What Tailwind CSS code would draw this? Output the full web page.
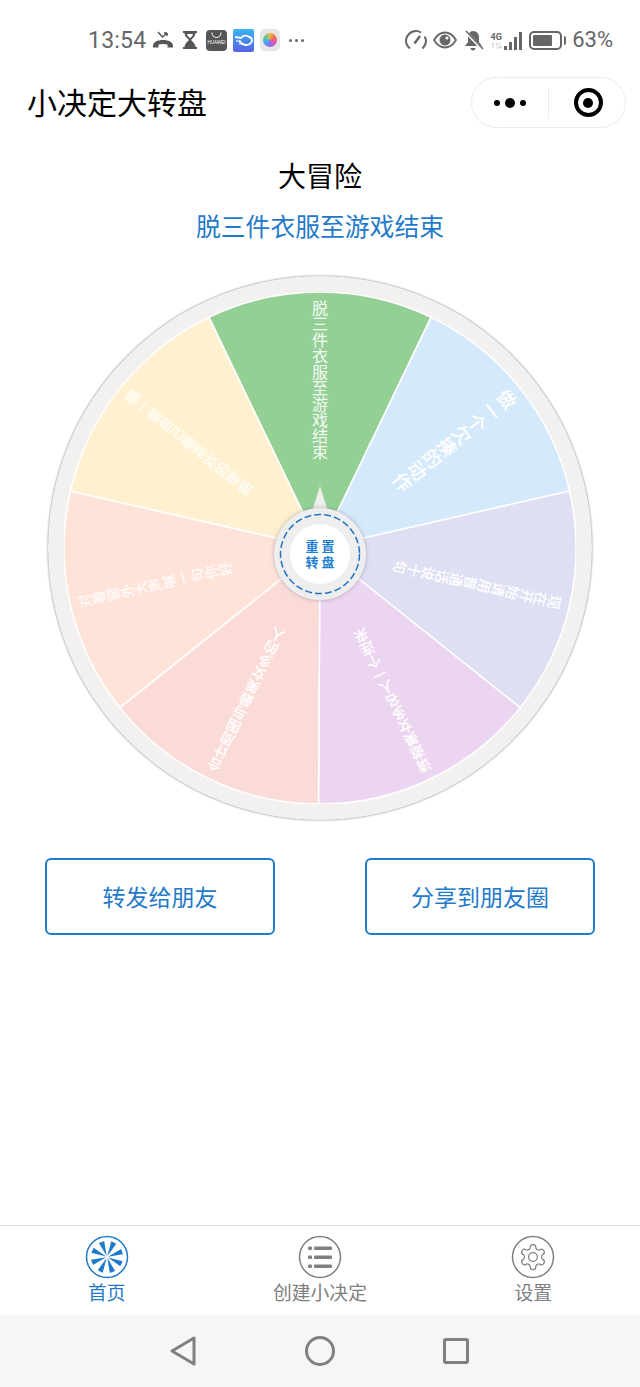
<!DOCTYPE html>
<html lang="zh-CN">
<head>
  <meta charset="UTF-8">
  <meta name="viewport" content="width=device-width, initial-scale=1.0">
  <title>小决定大转盘</title>
  <script src="https://cdn.jsdelivr.net/npm/@tailwindcss/browser@4"></script>
</head>
<body class="bg-white">
<div class="w-[640px] h-[1387px] flex flex-col overflow-hidden bg-white font-['Noto_Sans_CJK_SC',sans-serif]">

  <!-- status bar -->
  <div class="h-[77px] pt-[3px] pl-[88px] pr-[27px] flex items-center justify-between text-[#666]">
    <div class="flex items-center">
      <span class="font-['Roboto',sans-serif] text-[23px] leading-none tracking-[0.2px]">13:54</span>
      <svg class="ml-[6px]" width="22" height="22" viewBox="0 0 22 22" fill="none">
        <path d="M1 17c0-4 4.500-6 10-6s10 2 10 6v1.500h-5.500v-3c-3-.8-6-.8-9 0v3H1z" fill="#555"/>
        <path d="M6 3l4.500 5L15 4M15 4h-3M15 4v3" stroke="#555" stroke-width="1.500"/>
      </svg>
      <svg class="ml-[8px]" width="16" height="20" viewBox="0 0 16 20">
        <path d="M1 1h14v2h-1.500c0 3-2.500 5-4.500 7 2 2 4.500 4 4.500 7H15v2H1v-2h1.500c0-3 2.500-5 4.500-7-2-2-4.500-4-4.500-7H1z" fill="#555"/>
        <path d="M5 4h6c0 1.500-1.500 3-3 4-1.500-1-3-2.500-3-4z" fill="#fff"/>
      </svg>
      <svg class="ml-[8px]" width="21" height="21" viewBox="0 0 21 21">
        <rect width="21" height="21" rx="4" fill="#555"/>
        <path d="M6 2.500c0 3.500 2 5 4.500 5s4.500-1.500 4.500-5" fill="none" stroke="#fff" stroke-width="1"/>
        <text x="10.500" y="14" text-anchor="middle" font-size="4.500" fill="#fff" font-family="Liberation Sans">HUAWEI</text>
      </svg>
      <svg class="ml-[6px]" width="21" height="23" viewBox="0 0 21 23">
        <defs><linearGradient id="blueApp" x1="0" y1="0" x2="0" y2="1"><stop offset="0" stop-color="#38b6f0"/><stop offset="1" stop-color="#5a5fe8"/></linearGradient></defs>
        <rect width="21" height="23" rx="2" fill="url(#blueApp)"/>
        <path d="M2 8l6 1c2-3 6-3 8-1 2 0 3 2 3 4-1 3-3 4-6 4-3 0-5-2-7-4" fill="none" stroke="#fff" stroke-width="1.800"/>
        <path d="M3 12h5M6 15h4" stroke="#fff" stroke-width="1.200"/>
      </svg>
      <div class="ml-[6px] w-[20px] h-[22px] rounded-[5px] bg-[#e6e6e6] flex items-center justify-center">
        <div class="w-[14px] h-[14px] rounded-full bg-[conic-gradient(#f6b73c,#f2695c,#e05bb5,#8f6be8,#4fa3ee,#58c9a5,#f6b73c)]"></div>
      </div>
      <div class="ml-[9px] flex gap-[3px]">
        <span class="w-[3px] h-[3px] rounded-full bg-[#666]"></span>
        <span class="w-[3px] h-[3px] rounded-full bg-[#666]"></span>
        <span class="w-[3px] h-[3px] rounded-full bg-[#666]"></span>
      </div>
    </div>
    <div class="flex items-center">
      <svg width="22" height="20" viewBox="0 0 22 20" fill="none" stroke="#666" stroke-width="2">
        <path d="M5 18.500C2.500 16.500 1 14 1 11 1 5.500 5.500 1 11 1c2 0 3.500.5 5 1.500"/>
        <path d="M19.500 6.500c1 1.500 1.500 3 1.500 4.500 0 3-1.500 5.500-3.500 7.500"/>
        <path d="M9.500 13.500L15 6" stroke-width="2.500"/>
      </svg>
      <svg class="ml-[6px]" width="24" height="18" viewBox="0 0 24 18">
        <path d="M1 9c3-5 7-7.500 11-7.500S20 4 23 9c-3 5-7 7.500-11 7.500S4 14 1 9z" fill="none" stroke="#666" stroke-width="1.800"/>
        <circle cx="12" cy="9" r="5.500" fill="#666"/>
        <circle cx="14" cy="7" r="1.500" fill="#fff"/>
      </svg>
      <svg class="ml-[6px]" width="21" height="21" viewBox="0 0 21 21">
        <path d="M10 1c4 0 6 3 6 7v4l3 4H2l3-4V8c0-4 2-7 5-7z" fill="#666"/>
        <path d="M7.500 18h5c0 1.500-1 2.500-2.500 2.500S7.500 19.500 7.500 18z" fill="#666"/>
        <path d="M2 1l17 18" stroke="#fff" stroke-width="3"/>
        <path d="M3 1l17 18" stroke="#666" stroke-width="1.500"/>
      </svg>
      <div class="ml-[6px] flex items-end h-[20px]">
        <div class="flex flex-col items-center w-[12px]">
          <span class="font-['Roboto',sans-serif] text-[9px] font-bold leading-[10px] text-[#666]">4G</span>
          <span class="font-['Roboto',sans-serif] text-[7px] leading-[8px] text-[#bbb]">1&#8645;</span>
        </div>
        <div class="ml-[2px] flex items-end gap-[2px]">
          <span class="w-[3px] h-[4px] bg-[#666]"></span>
          <span class="w-[3px] h-[8px] bg-[#666]"></span>
          <span class="w-[3px] h-[13px] bg-[#666]"></span>
          <span class="w-[3px] h-[18px] bg-[#666]"></span>
        </div>
      </div>
      <div class="ml-[7px] flex items-center">
        <div class="w-[33px] h-[19px] rounded-[5px] border-2 border-[#666] p-[2px]">
          <div class="w-[19px] h-full rounded-[1px] bg-[#666]"></div>
        </div>
        <div class="ml-[2px] w-[2px] h-[9px] rounded-r-sm bg-[#666]"></div>
      </div>
      <span class="ml-[6px] font-['Roboto',sans-serif] text-[22px] leading-none">63%</span>
    </div>
  </div>

  <!-- title bar -->
  <div class="h-[51px] pl-[27px] pr-[14px] flex items-center justify-between">
    <h1 class="mb-[4px] text-[30px] leading-none font-normal text-black">小决定大转盘</h1>
    <div class="w-[155px] h-[51px] rounded-full border border-[#ececec] flex items-center">
      <div class="w-[76px] flex items-center justify-center gap-[5px]">
        <span class="w-[6px] h-[6px] rounded-full bg-black"></span>
        <span class="w-[10px] h-[10px] rounded-full bg-black"></span>
        <span class="w-[6px] h-[6px] rounded-full bg-black"></span>
      </div>
      <div class="w-px h-[30px] bg-[#ececec]"></div>
      <div class="flex-1 pl-[2px] flex items-center justify-center">
        <div class="w-[29px] h-[29px] rounded-full border-[4px] border-black flex items-center justify-center">
          <span class="w-[10px] h-[10px] rounded-full bg-black"></span>
        </div>
      </div>
    </div>
  </div>

  <!-- current result -->
  <div class="mt-[27px] text-center text-[28px] leading-[40px] text-black">大冒险</div>
  <div class="mt-[14px] text-center text-[24.800px] leading-[32px] text-[#1f7ac9]">脱三件衣服至游戏结束</div>

  <!-- wheel -->
  <div class="relative mt-[35px] mx-auto w-[544px] h-[544px] shrink-0 rounded-full bg-[#f3f1ef] shadow-[0_0_2px_rgba(0,0,0,0.6)]">
    <div class="absolute inset-[16px]">
      <svg class="absolute inset-0" width="512" height="512" viewBox="0 0 512 512" stroke="#fff" stroke-width="1.500">
        <path d="M256 256L144.920 25.350A256 256 0 0 1 367.080 25.350Z" fill="#94d094"/>
        <path d="M256 256L367.080 25.350A256 256 0 0 1 505.580 199.030Z" fill="#d4e9fb"/>
        <path d="M256 256L505.580 199.030A256 256 0 0 1 456.150 415.610Z" fill="#dedff2"/>
        <path d="M256 256L456.150 415.610A256 256 0 0 1 254.500 512Z" fill="#ecd5f0"/>
        <path d="M256 256L254.500 512A256 256 0 0 1 55.850 415.610Z" fill="#fbdbd8"/>
        <path d="M256 256L55.850 415.610A256 256 0 0 1 6.420 199.030Z" fill="#ffe3d9"/>
        <path d="M256 256L6.420 199.030A256 256 0 0 1 144.920 25.350Z" fill="#fff1cf"/>
      </svg>
      <div class="absolute inset-0 flex justify-center pt-[8px]">
        <span class="[writing-mode:vertical-rl] h-fit text-[16px] leading-none text-white/90">脱三件衣服至游戏结束</span>
      </div>
      <div class="absolute inset-0 flex justify-center pt-[8px] rotate-[51.43deg]">
        <span class="[writing-mode:vertical-rl] h-fit text-[19px] leading-none font-medium text-white">做一个欠揍的动作</span>
      </div>
      <div class="absolute inset-0 flex justify-center pt-[8px] rotate-[102.86deg]">
        <span class="[writing-mode:vertical-rl] h-fit text-[14.400px] leading-none font-medium text-white">现在开始请用普通话说十句</span>
      </div>
      <div class="absolute inset-0 flex justify-center pt-[8px] rotate-[154.29deg]">
        <span class="[writing-mode:vertical-rl] h-fit text-[14.400px] leading-none font-medium text-white">请邀美女多名人一个连来</span>
      </div>
      <div class="absolute inset-0 flex justify-center pt-[8px] rotate-[205.71deg]">
        <span class="[writing-mode:vertical-rl] h-fit text-[14.400px] leading-none font-medium text-white">合计周围与最美女多的人</span>
      </div>
      <div class="absolute inset-0 flex justify-center pt-[8px] rotate-[257.14deg]">
        <span class="[writing-mode:vertical-rl] h-fit text-[14.400px] leading-none font-medium text-white/80">对着窗外大声喊一句你好</span>
      </div>
      <div class="absolute inset-0 flex justify-center pt-[8px] rotate-[308.57deg]">
        <span class="[writing-mode:vertical-rl] h-fit text-[14.400px] leading-none font-medium text-white/80">唱一首自己最喜欢的歌曲</span>
      </div>
    </div>

    <!-- pointer and reset button -->
    <svg class="absolute left-[262px] top-[210px]" width="20" height="32" viewBox="0 0 20 32">
      <path d="M10 0L20 32H0Z" fill="#f0eeed"/>
    </svg>
    <div class="absolute left-[226px] top-[232px] w-[92px] h-[92px] rounded-full bg-[#eeeeee] shadow-[0_0_4px_rgba(120,120,140,0.5)] flex items-center justify-center">
      <svg class="absolute inset-0" width="92" height="92" viewBox="0 0 92 92" fill="none">
        <circle cx="46" cy="46" r="39.500" stroke="#1f74c4" stroke-width="1.500" stroke-dasharray="7 3"/>
      </svg>
      <div class="w-[60px] h-[60px] rounded-full bg-white flex items-center justify-center text-center text-[13px] leading-[16px] font-semibold tracking-[3px] pl-[3px] text-[#1f7fd4]">
        <p>重置<br>转盘</p>
      </div>
    </div>
  </div>

  <!-- share buttons -->
  <div class="mt-[38px] px-[45px] flex justify-between">
    <button class="w-[230px] h-[77px] rounded-md border-2 border-[#1f7ac9] text-[23px] text-[#1f7ac9]">转发给朋友</button>
    <button class="w-[230px] h-[77px] rounded-md border-2 border-[#1f7ac9] text-[23px] text-[#1f7ac9]">分享到朋友圈</button>
  </div>

  <div class="flex-1"></div>

  <!-- tab bar -->
  <div class="h-[90px] border-t border-[#dcdcdc] grid grid-cols-3 text-[18.800px] leading-[24px] text-[#808080]">
    <div class="flex flex-col items-center pt-[9px]">
      <svg width="44" height="44" viewBox="0 0 44 44">
        <circle cx="22" cy="22" r="20.500" fill="none" stroke="#1f7ac9" stroke-width="1.500"/>
        <g fill="#1f7ac9">
          <path d="M22 21L19.200 6h5.600Z" transform="rotate(-20 22 22)"/>
          <path d="M22 21L19.200 6h5.600Z" transform="rotate(25 22 22)"/>
          <path d="M22 21L19.200 6h5.600Z" transform="rotate(70 22 22)"/>
          <path d="M22 21L19.200 6h5.600Z" transform="rotate(115 22 22)"/>
          <path d="M22 21L19.200 6h5.600Z" transform="rotate(160 22 22)"/>
          <path d="M22 21L19.200 6h5.600Z" transform="rotate(205 22 22)"/>
          <path d="M22 21L19.200 6h5.600Z" transform="rotate(250 22 22)"/>
          <path d="M22 21L19.200 6h5.600Z" transform="rotate(295 22 22)"/>
        </g>
      </svg>
      <span class="mt-[1px] text-[#1f7ac9]">首页</span>
    </div>
    <div class="flex flex-col items-center pt-[9px]">
      <svg width="44" height="44" viewBox="0 0 44 44" fill="#808080">
        <circle cx="22" cy="22" r="20.500" fill="none" stroke="#808080" stroke-width="1.500"/>
        <rect x="10" y="11.500" width="4" height="3.500" rx="1"/>
        <rect x="10" y="20.500" width="4" height="3.500" rx="1"/>
        <rect x="10" y="29.500" width="4" height="3.500" rx="1"/>
        <rect x="16" y="11.500" width="18" height="3.500" rx="1"/>
        <rect x="16" y="20.500" width="18" height="3.500" rx="1"/>
        <rect x="16" y="29.500" width="18" height="3.500" rx="1"/>
      </svg>
      <span class="mt-[1px]">创建小决定</span>
    </div>
    <div class="flex flex-col items-center pt-[9px]">
      <svg width="44" height="44" viewBox="0 0 44 44" fill="none" stroke="#808080">
        <circle cx="22" cy="22" r="20.500" stroke-width="1.500"/>
        <g transform="translate(7 7) scale(1.250)" stroke-width="1">
          <path d="M12.220 2h-.44a2 2 0 0 0-2 2v.18a2 2 0 0 1-1 1.730l-.43.250a2 2 0 0 1-2 0l-.15-.08a2 2 0 0 0-2.730.730l-.22.380a2 2 0 0 0 .730 2.730l.15.1a2 2 0 0 1 1 1.720v.51a2 2 0 0 1-1 1.740l-.15.09a2 2 0 0 0-.73 2.730l.22.380a2 2 0 0 0 2.730.730l.15-.08a2 2 0 0 1 2 0l.43.250a2 2 0 0 1 1 1.730V20a2 2 0 0 0 2 2h.44a2 2 0 0 0 2-2v-.18a2 2 0 0 1 1-1.730l.43-.25a2 2 0 0 1 2 0l.15.08a2 2 0 0 0 2.730-.73l.22-.39a2 2 0 0 0-.73-2.730l-.15-.08a2 2 0 0 1-1-1.740v-.5a2 2 0 0 1 1-1.740l.15-.09a2 2 0 0 0 .73-2.730l-.22-.38a2 2 0 0 0-2.730-.73l-.15.08a2 2 0 0 1-2 0l-.43-.25a2 2 0 0 1-1-1.730V4a2 2 0 0 0-2-2z"/>
          <circle cx="12" cy="12" r="3.500"/>
        </g>
      </svg>
      <span class="mt-[1px]">设置</span>
    </div>
  </div>

  <!-- system nav -->
  <div class="h-[72px] bg-[#f6f6f6] pl-[170px] flex items-center">
    <svg width="26" height="30" viewBox="0 0 26 30" fill="none" stroke="#808080" stroke-width="3" stroke-linejoin="round" class="mr-[109px]">
      <path d="M24 2v26L2 15Z"/>
    </svg>
    <svg width="30" height="30" viewBox="0 0 30 30" fill="none" stroke="#808080" stroke-width="3">
      <circle cx="15" cy="15" r="13.500"/>
    </svg>
    <div class="ml-[108px] w-[26px] h-[26px] rounded-[3px] border-[3px] border-[#808080]"></div>
  </div>
</div>
</body>
</html>
